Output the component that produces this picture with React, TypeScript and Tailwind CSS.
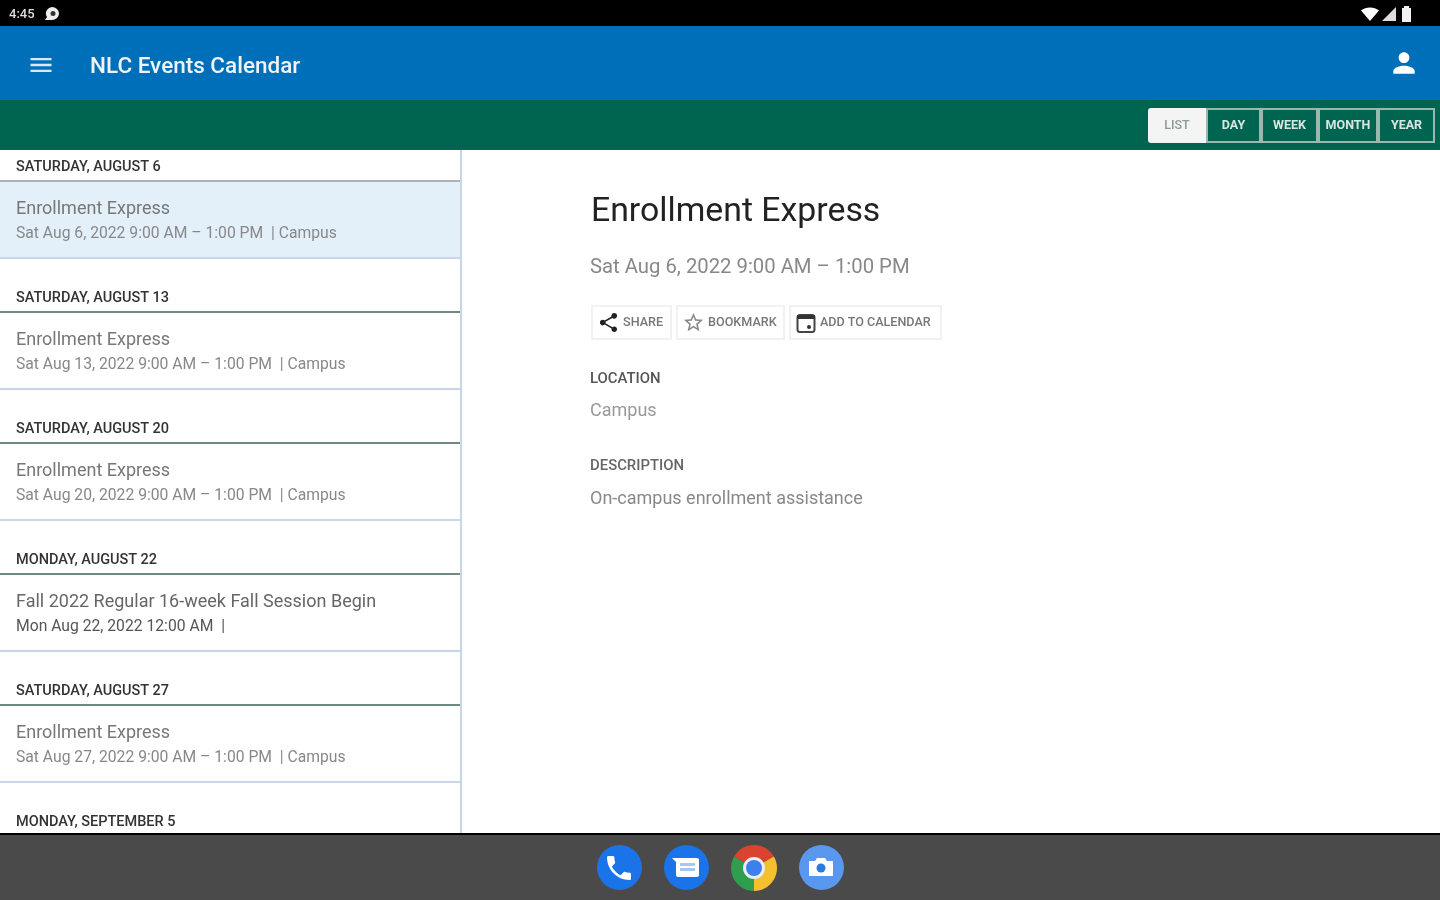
import { MdMenu, MdPerson, MdShare, MdStarBorder, MdPhone } from "react-icons/md";

const sections = [
  { h: "SATURDAY, AUGUST 6", t: "Enrollment Express", s: "Sat Aug 6, 2022 9:00 AM – 1:00 PM", p: "Campus", first: true },
  { h: "SATURDAY, AUGUST 13", t: "Enrollment Express", s: "Sat Aug 13, 2022 9:00 AM – 1:00 PM", p: "Campus" },
  { h: "SATURDAY, AUGUST 20", t: "Enrollment Express", s: "Sat Aug 20, 2022 9:00 AM – 1:00 PM", p: "Campus" },
  { h: "MONDAY, AUGUST 22", t: "Fall 2022 Regular 16-week Fall Session Begin", s: "Mon Aug 22, 2022 12:00 AM", p: "", dark: true },
  { h: "SATURDAY, AUGUST 27", t: "Enrollment Express", s: "Sat Aug 27, 2022 9:00 AM – 1:00 PM", p: "Campus" },
];

function Section({ h, t, s, p, first, dark }: { h: string; t: string; s: string; p: string; first?: boolean; dark?: boolean }) {
  return (
    <div className="shrink-0">
      <div className={`flex items-end px-4 pb-[4px] text-[14.5px] leading-[18px] font-medium text-[#333] ${first ? "h-[30px]" : "h-[52px]"}`}>{h}</div>
      <div className={`h-[79px] border-t-2 border-b-2 border-b-[#c9d6ea] px-4 pt-[14px] ${first ? "border-t-[#a9b5b2] bg-[#e3f0fa]" : "border-t-[#6c8a80]"}`}>
        <div className={`text-[18px] leading-[24px] ${dark ? "text-[#666]" : "text-[#777]"}`}>{t}</div>
        <div className={`mt-[1px] text-[15.7px] leading-[24px] whitespace-pre ${dark ? "text-[#555]" : "text-[#888]"}`}>
          {s}{"  "}| {p}
        </div>
      </div>
    </div>
  );
}

function Tab({ label, active, w }: { label: string; active?: boolean; w: string }) {
  return (
    <div className={`flex h-[35px] items-center justify-center pb-[1px] text-[12.5px] font-bold ${w} ${active ? "rounded-l-[3px] bg-[#f4f4f4] font-medium text-[#8a9a96]" : "border-2 border-[#9ab8ad] text-[#d8e6e1]"}`}>
      {label}
    </div>
  );
}

function ActionBtn({ icon, label, w }: { icon: React.ReactNode; label: string; w: string }) {
  return (
    <div className={`flex h-[35px] items-center gap-[3px] border-2 border-[#f0f1f1] pl-[4px] text-[12.6px] font-medium text-[#777] ${w}`}>
      {icon}
      <span className="whitespace-nowrap">{label}</span>
    </div>
  );
}

export default function App() {
  return (
    <div className="flex h-[900px] w-[1440px] flex-col overflow-hidden bg-white font-['Roboto',sans-serif] [filter:blur(0.7px)]">
      <div className="flex h-[26px] shrink-0 items-center justify-between bg-black pl-[9px] pr-[28px] pt-[1px]">
        <div className="flex items-center gap-[8px]">
          <span className="text-[13px] font-medium text-[#ddd]">4:45</span>
          <svg width="18" height="16" viewBox="0 0 18 16">
            <path d="M9 1a7 6.5 0 0 1 0 13H2l2-3a7 6.5 0 0 1 5-10z" fill="#eee" />
            <circle cx="10" cy="7.5" r="2.5" fill="#333" />
          </svg>
        </div>
        <div className="flex items-center gap-[3px]">
          <svg width="18" height="14" viewBox="0 0 18 14"><path d="M0 3.5C5 -.5 13 -.5 18 3.5L9 14z" fill="#fff" /></svg>
          <svg width="14" height="14" viewBox="0 0 14 14"><path d="M14 0V14H0z" fill="#ddd" /></svg>
          <svg width="11" height="16" viewBox="0 0 11 16" className="ml-[2px]"><path d="M3 0h5v2h2v14H1V2h2z" fill="#f2f2f2" /></svg>
        </div>
      </div>
      <div className="flex h-[74px] shrink-0 items-center bg-[#006fba] pl-[27px] pr-[20px] text-white">
        <MdMenu size={28} className="mt-[3px] text-[#dce9f5]" />
        <div className="ml-[35px] mt-[5px] text-[22.5px] font-medium text-[#eef4fa]">NLC Events Calendar</div>
        <MdPerson size={32} className="ml-auto" />
      </div>
      <div className="flex h-[50px] shrink-0 items-center justify-end bg-[#006550] pr-[5px] pt-[1px]">
        <Tab label="LIST" active w="w-[58px]" />
        <Tab label="DAY" w="w-[55px]" />
        <Tab label="WEEK" w="w-[57px]" />
        <Tab label="MONTH" w="w-[60px]" />
        <Tab label="YEAR" w="w-[57px]" />
      </div>
      <div className="flex min-h-0 flex-1">
        <div className="flex w-[462px] shrink-0 flex-col overflow-hidden border-r-2 border-[#c9d6ea]">
          {sections.map((x) => (
            <Section key={x.h} {...x} />
          ))}
          <div className="flex h-[52px] shrink-0 items-end px-4 pb-[4px] text-[14.5px] leading-[18px] font-medium text-[#333]">MONDAY, SEPTEMBER 5</div>
        </div>
        <div className="flex-1 pl-[129px] pt-[38px]">
          <div className="text-[33.8px] leading-[44px] text-[#222]">Enrollment Express</div>
          <div className="-ml-[1px] mt-[20px] text-[20.3px] leading-[28px] text-[#888]">Sat Aug 6, 2022 9:00 AM – 1:00 PM</div>
          <div className="mt-[25px] flex gap-[4px]">
            <ActionBtn w="w-[81px]" label="SHARE" icon={<MdShare size={23} className="text-[#222]" />} />
            <ActionBtn w="w-[109px]" label="BOOKMARK" icon={<MdStarBorder size={23} className="text-[#888]" />} />
            <ActionBtn
              w="w-[153px]"
              label="ADD TO CALENDAR"
              icon={
                <svg width="22" height="24" viewBox="0 0 22 24" fill="none">
                  <rect x="2.5" y="4" width="17" height="17" rx="2.5" stroke="#444" strokeWidth="2" />
                  <path d="M2 4h18v4H2z" fill="#333" />
                  <circle cx="14" cy="16" r="2" fill="#333" />
                </svg>
              }
            />
          </div>
          <div className="-ml-[1px] mt-[29px] text-[14.9px] leading-[18px] font-medium text-[#555]">LOCATION</div>
          <div className="-ml-[1px] mt-[11px] text-[18px] leading-[24px] text-[#999]">Campus</div>
          <div className="-ml-[1px] mt-[34px] text-[14.9px] leading-[18px] font-medium text-[#666]">DESCRIPTION</div>
          <div className="-ml-[1px] mt-[12px] text-[18px] leading-[24px] text-[#888]">On-campus enrollment assistance</div>
        </div>
      </div>
      <div className="flex h-[67px] shrink-0 items-center justify-center gap-[22px] border-t-2 border-black bg-[#4a4a4a]">
        <div className="flex h-[45px] w-[45px] items-center justify-center rounded-full bg-[#1a73e8]">
          <MdPhone size={32} className="text-white" />
        </div>
        <div className="flex h-[45px] w-[45px] items-center justify-center rounded-full bg-[#1a73e8]">
          <svg width="30" height="26" viewBox="0 0 30 26">
            <path d="M1 3h25a2 2 0 0 1 2 2v15a2 2 0 0 1-2 2H7a2 2 0 0 1-2-2V7z" fill="#fff" />
            <path d="M9 8h15v3H9zM9 13h15v3H9z" fill="#a9c6f3" />
          </svg>
        </div>
        <svg width="46" height="46" viewBox="0 0 46 46">
          <path d="M23 23 L3.1 11.5 A23 23 0 0 1 42.9 11.5 Z" fill="#d9432f" />
          <path d="M23 23 L42.9 11.5 A23 23 0 0 1 23 46 Z" fill="#f5c02e" />
          <path d="M23 23 L23 46 A23 23 0 0 1 3.1 11.5 Z" fill="#2f9e4f" />
          <circle cx="23" cy="23" r="11" fill="#e8eef8" />
          <circle cx="23" cy="23" r="8" fill="#3f80e8" />
        </svg>
        <div className="flex h-[45px] w-[45px] items-center justify-center rounded-full bg-[#5a97ee]">
          <svg width="30" height="28" viewBox="0 0 30 28">
            <path d="M3 7h6l2-3h8l2 3h6v15H3z" fill="#fff" />
            <circle cx="15" cy="14" r="4.5" fill="#2f78e4" />
          </svg>
        </div>
      </div>
    </div>
  );
}
